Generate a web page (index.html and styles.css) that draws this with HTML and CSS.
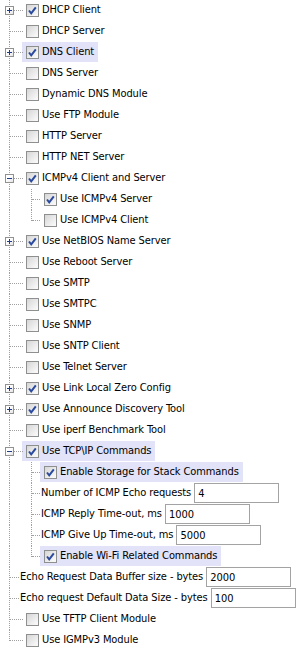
FILE: index.html
```html
<!DOCTYPE html>
<html lang="en">
  <head>
    <meta charset="UTF-8" />
    <meta name="viewport" content="width=device-width, initial-scale=1.0" />
    <link rel="stylesheet" href="styles.css">
    <title>TCP/IP Options</title>
  </head>
  <body>
    <div class="tree">
      <div class="row">
        <span class="g tee"><span class="exp plus"></span></span>
        <span class="node"><span class="cb on"><svg viewBox="0 0 11 11"><path d="M2 5.5l2.2 2.8 4.6-6"/></svg></span><span class="lbl">DHCP Client</span></span>
      </div>
      <div class="row">
        <span class="g tee"></span>
        <span class="node"><span class="cb"></span><span class="lbl">DHCP Server</span></span>
      </div>
      <div class="row">
        <span class="g tee"><span class="exp plus"></span></span>
        <span class="node sel"><span class="cb on"><svg viewBox="0 0 11 11"><path d="M2 5.5l2.2 2.8 4.6-6"/></svg></span><span class="lbl">DNS Client</span></span>
      </div>
      <div class="row">
        <span class="g tee"></span>
        <span class="node"><span class="cb"></span><span class="lbl">DNS Server</span></span>
      </div>
      <div class="row">
        <span class="g tee"></span>
        <span class="node"><span class="cb"></span><span class="lbl">Dynamic DNS Module</span></span>
      </div>
      <div class="row">
        <span class="g tee"></span>
        <span class="node"><span class="cb"></span><span class="lbl">Use FTP Module</span></span>
      </div>
      <div class="row">
        <span class="g tee"></span>
        <span class="node"><span class="cb"></span><span class="lbl">HTTP Server</span></span>
      </div>
      <div class="row">
        <span class="g tee"></span>
        <span class="node"><span class="cb"></span><span class="lbl">HTTP NET Server</span></span>
      </div>
      <div class="row">
        <span class="g tee"><span class="exp"></span></span>
        <span class="node"><span class="cb on"><svg viewBox="0 0 11 11"><path d="M2 5.5l2.2 2.8 4.6-6"/></svg></span><span class="lbl">ICMPv4 Client and Server</span></span>
      </div>
      <div class="row">
        <span class="g pipe"></span>
        <span class="g g2 tee"></span>
        <span class="node"><span class="cb on"><svg viewBox="0 0 11 11"><path d="M2 5.5l2.2 2.8 4.6-6"/></svg></span><span class="lbl">Use ICMPv4 Server</span></span>
      </div>
      <div class="row">
        <span class="g pipe"></span>
        <span class="g g2 ell"></span>
        <span class="node"><span class="cb"></span><span class="lbl">Use ICMPv4 Client</span></span>
      </div>
      <div class="row">
        <span class="g tee"><span class="exp plus"></span></span>
        <span class="node"><span class="cb on"><svg viewBox="0 0 11 11"><path d="M2 5.5l2.2 2.8 4.6-6"/></svg></span><span class="lbl">Use NetBIOS Name Server</span></span>
      </div>
      <div class="row">
        <span class="g tee"></span>
        <span class="node"><span class="cb"></span><span class="lbl">Use Reboot Server</span></span>
      </div>
      <div class="row">
        <span class="g tee"></span>
        <span class="node"><span class="cb"></span><span class="lbl">Use SMTP</span></span>
      </div>
      <div class="row">
        <span class="g tee"></span>
        <span class="node"><span class="cb"></span><span class="lbl">Use SMTPC</span></span>
      </div>
      <div class="row">
        <span class="g tee"></span>
        <span class="node"><span class="cb"></span><span class="lbl">Use SNMP</span></span>
      </div>
      <div class="row">
        <span class="g tee"></span>
        <span class="node"><span class="cb"></span><span class="lbl">Use SNTP Client</span></span>
      </div>
      <div class="row">
        <span class="g tee"></span>
        <span class="node"><span class="cb"></span><span class="lbl">Use Telnet Server</span></span>
      </div>
      <div class="row">
        <span class="g tee"><span class="exp plus"></span></span>
        <span class="node"><span class="cb on"><svg viewBox="0 0 11 11"><path d="M2 5.5l2.2 2.8 4.6-6"/></svg></span><span class="lbl">Use Link Local Zero Config</span></span>
      </div>
      <div class="row">
        <span class="g tee"><span class="exp plus"></span></span>
        <span class="node"><span class="cb on"><svg viewBox="0 0 11 11"><path d="M2 5.5l2.2 2.8 4.6-6"/></svg></span><span class="lbl">Use Announce Discovery Tool</span></span>
      </div>
      <div class="row">
        <span class="g tee"></span>
        <span class="node"><span class="cb"></span><span class="lbl">Use iperf Benchmark Tool</span></span>
      </div>
      <div class="row">
        <span class="g tee"><span class="exp"></span></span>
        <span class="node sel"><span class="cb on"><svg viewBox="0 0 11 11"><path d="M2 5.5l2.2 2.8 4.6-6"/></svg></span><span class="lbl">Use TCP\IP Commands</span></span>
      </div>
      <div class="row">
        <span class="g pipe"></span>
        <span class="g g2 tee"></span>
        <span class="node sel"><span class="cb on"><svg viewBox="0 0 11 11"><path d="M2 5.5l2.2 2.8 4.6-6"/></svg></span><span class="lbl">Enable Storage for Stack Commands</span></span>
      </div>
      <div class="row">
        <span class="g pipe"></span>
        <span class="g g2 tee"></span>
        <span class="node txt"><span class="lbl">Number of ICMP Echo requests</span><input class="field" type="text" value="4" /></span>
      </div>
      <div class="row">
        <span class="g pipe"></span>
        <span class="g g2 tee"></span>
        <span class="node txt"><span class="lbl">ICMP Reply Time-out, ms</span><input class="field" type="text" value="1000" /></span>
      </div>
      <div class="row">
        <span class="g pipe"></span>
        <span class="g g2 tee"></span>
        <span class="node txt"><span class="lbl">ICMP Give Up Time-out, ms</span><input class="field" type="text" value="5000" /></span>
      </div>
      <div class="row">
        <span class="g pipe"></span>
        <span class="g g2 ell"></span>
        <span class="node sel"><span class="cb on"><svg viewBox="0 0 11 11"><path d="M2 5.5l2.2 2.8 4.6-6"/></svg></span><span class="lbl">Enable Wi-Fi Related Commands</span></span>
      </div>
      <div class="row">
        <span class="g tee short"></span>
        <span class="node txt"><span class="lbl">Echo Request Data Buffer size - bytes</span><input class="field" type="text" value="2000" /></span>
      </div>
      <div class="row">
        <span class="g tee short"></span>
        <span class="node txt"><span class="lbl">Echo request Default Data Size - bytes</span><input class="field" type="text" value="100" /></span>
      </div>
      <div class="row">
        <span class="g tee"></span>
        <span class="node"><span class="cb"></span><span class="lbl">Use TFTP Client Module</span></span>
      </div>
      <div class="row">
        <span class="g ell"></span>
        <span class="node"><span class="cb"></span><span class="lbl">Use IGMPv3 Module</span></span>
      </div>
    </div>
  </body>
</html>
```

FILE: styles.css
```css
* {
  box-sizing: border-box;
}

body {
  margin: 0;
  background: #fff;
  color: #000;
  font-family: "DejaVu Sans Condensed", "DejaVu Sans", sans-serif;
  font-stretch: condensed;
  font-size: 11px;
  letter-spacing: -0.1px;
}

.tree {
  display: flex;
  flex-direction: column;
}

.row {
  display: flex;
  align-items: flex-start;
  height: 21px;
}

/* tree guide lines */
.g {
  position: relative;
  flex: none;
  width: 22px;
  height: 21px;
}
.g::before {
  content: "";
  position: absolute;
  left: 9px;
  top: 0;
  bottom: 0;
  border-left: 1px dotted #a0a0a0;
}
.g.tee::after,
.g.ell::after {
  content: "";
  position: absolute;
  left: 10px;
  top: 10px;
  width: 13px;
  border-top: 1px dotted #a0a0a0;
}
.g.ell::before {
  bottom: 10px;
}
.g.short::after {
  width: 9px;
}
.g.g2 {
  width: 18px;
}
.g.g2::after {
  width: 8px;
}

.exp {
  position: absolute;
  left: 5px;
  top: 6px;
  width: 9px;
  height: 9px;
  border: 1px solid #919191;
  background: linear-gradient(135deg, #fff 40%, #e4e4e4);
  z-index: 1;
}
.exp::before {
  content: "";
  position: absolute;
  left: 1px;
  top: 3px;
  width: 5px;
  height: 1px;
  background: #1f3d86;
}
.exp.plus::after {
  content: "";
  position: absolute;
  left: 3px;
  top: 1px;
  width: 1px;
  height: 5px;
  background: #1f3d86;
}

/* node content */
.node {
  display: flex;
  align-items: center;
  height: 20px;
  padding: 0 4px;
  white-space: nowrap;
}
.node.sel {
  background: #e2e2f8;
}
.node.txt {
  margin-left: -2px;
  padding: 0;
}
.g2 + .node.txt {
  margin-left: 1px;
}

.cb {
  flex: none;
  width: 13px;
  height: 13px;
  margin-right: 3px;
  border: 1px solid #8e8f8f;
  background: linear-gradient(135deg, #d6d6d6, #f7f7f7 85%);
}
.cb svg {
  display: none;
  width: 11px;
  height: 11px;
}
.cb.on svg {
  display: block;
}
.cb path {
  fill: none;
  stroke: #2b4a9e;
  stroke-width: 2;
}

.lbl {
  line-height: 20px;
}

.field {
  width: 85px;
  height: 20px;
  margin: 0 0 0 3px;
  padding: 0 3px;
  border: 1px solid #a3a3a3;
  background: #fff;
  color: #000;
  font: inherit;
}
```
